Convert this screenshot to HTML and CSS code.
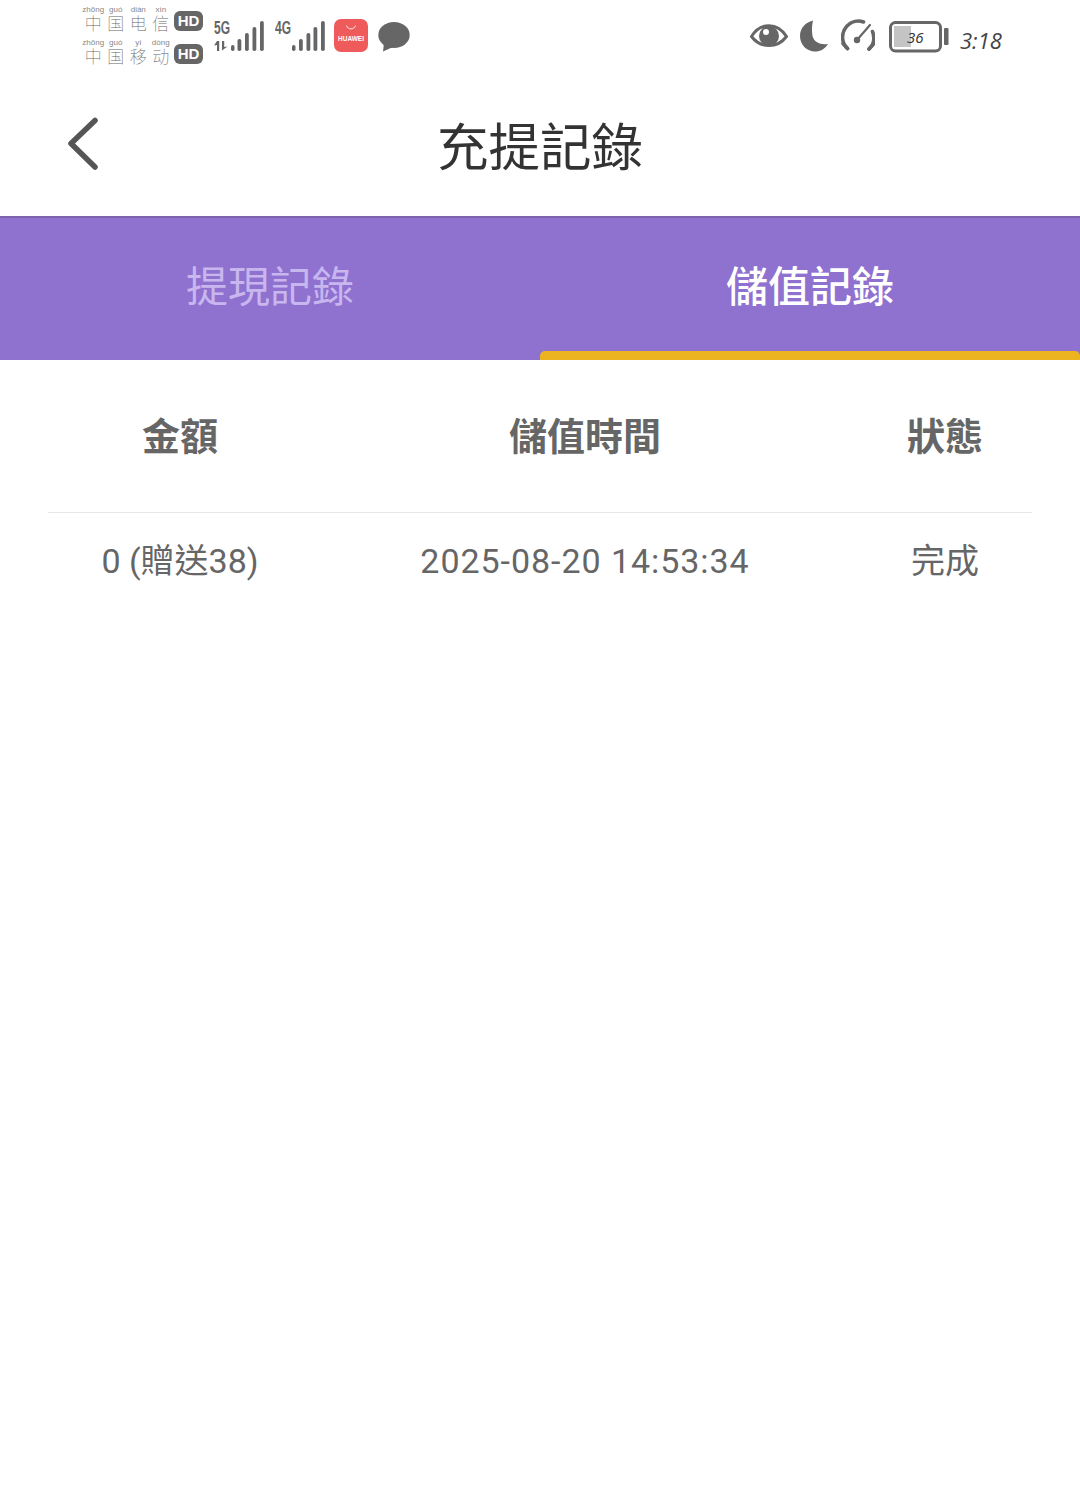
FILE: index.html
```html
<!DOCTYPE html>
<html lang="zh-Hant">
<head>
<meta charset="utf-8">
<title>充提記錄</title>
<link rel="stylesheet" href="styles.css">
</head>
<body>
<div class="page">
  <div class="status">
    <div class="carriers">
      <div class="carrier">
        <span class="hz"><i>zhōng</i><b>中</b></span>
        <span class="hz"><i>guó</i><b>国</b></span>
        <span class="hz"><i>diàn</i><b>电</b></span>
        <span class="hz"><i>xìn</i><b>信</b></span>
        <span class="hd">HD</span>
      </div>
      <div class="carrier">
        <span class="hz"><i>zhōng</i><b>中</b></span>
        <span class="hz"><i>guó</i><b>国</b></span>
        <span class="hz"><i>yí</i><b>移</b></span>
        <span class="hz"><i>dòng</i><b>动</b></span>
        <span class="hd">HD</span>
      </div>
    </div>
    <svg class="ico sig1" width="50" height="72" viewBox="214 0 50 72" fill="#666">
      <text x="214" y="34" class="sigt" textLength="16" lengthAdjust="spacingAndGlyphs">5G</text>
      <path d="M217 41h2.200v10H217v-6l-3 0.500zM222 41h2.200v6l3.300-.5-5.500 4z"/>
      <rect x="231" y="45" width="3.500" height="6" rx="1.700"/>
      <rect x="237.500" y="39" width="3.800" height="12" rx="1.800"/>
      <rect x="245" y="33" width="3.800" height="18" rx="1.800"/>
      <rect x="252.500" y="27" width="3.800" height="24" rx="1.800"/>
      <rect x="260" y="21" width="3.800" height="30" rx="1.800"/>
    </svg>
    <svg class="ico sig2" width="50" height="72" viewBox="275 0 50 72" fill="#666">
      <text x="275" y="34" class="sigt" textLength="16" lengthAdjust="spacingAndGlyphs">4G</text>
      <rect x="292" y="45" width="3.500" height="6" rx="1.700"/>
      <rect x="299" y="39" width="3.800" height="12" rx="1.800"/>
      <rect x="306.500" y="33" width="3.800" height="18" rx="1.800"/>
      <rect x="313.500" y="27" width="3.800" height="24" rx="1.800"/>
      <rect x="321" y="21" width="3.800" height="30" rx="1.800"/>
    </svg>
    <svg class="ico hw" width="34" height="72" viewBox="334 0 34 72">
      <rect x="334" y="19" width="34" height="33" rx="7" fill="#ef5a5b"/>
      <path d="M346.500 25.500c1 4.500 8 4.500 9 0" fill="none" stroke="#fff" stroke-width="1" opacity=".85"/>
      <text x="351" y="41" class="hwt">HUAWEI</text>
    </svg>
    <svg class="ico chat" width="32" height="72" viewBox="378 0 32 72" fill="#666">
      <ellipse cx="394" cy="35" rx="15.700" ry="13"/>
      <path d="M384 43l-1 8.500 11-5z"/>
    </svg>
    <div class="grow"></div>
    <svg class="ico eye" width="38" height="72" viewBox="750 0 38 72">
      <path d="M751.500 36.500c9-14.500 26-14.500 35 0c-9 12-26 12-35 0z" fill="none" stroke="#666" stroke-width="3"/>
      <circle cx="769" cy="36" r="10" fill="#666"/>
      <circle cx="766" cy="32" r="3" fill="#fff"/>
    </svg>
    <svg class="ico moon" width="28" height="72" viewBox="800 0 28 72" fill="#666">
      <path d="M813 20.500c-8 2-13 8-13 15.500c0 9 7 15.500 15 15.500c5.500 0 10-2.500 13-7.500c-8 1-14-2-15.500-8c-1-5-.5-11 .5-15.500z"/>
    </svg>
    <svg class="ico gauge" width="34" height="72" viewBox="841 0 34 72" fill="none" stroke="#666" stroke-width="3.600" stroke-linecap="round">
      <path d="M847.500 48.500c-6.500-6-6.500-16-.5-22.500c4.500-4.500 11-6 16.500-4"/>
      <path d="M843 43.500l4.500 5"/>
      <path d="M869 49c5.500-5 5.500-12 3.500-17.500"/>
      <path d="M873.500 44l-4.500 5"/>
      <path d="M857 40l13-15" stroke-width="2.200"/>
      <circle cx="857" cy="40" r="3.200" fill="#666" stroke="none"/>
    </svg>
    <svg class="ico batt" width="60" height="72" viewBox="889 0 60 72">
      <rect x="890.500" y="22.500" width="50" height="28.500" rx="5" fill="none" stroke="#666" stroke-width="3"/>
      <rect x="894" y="26" width="17" height="21" fill="#c4c4c4"/>
      <rect x="944" y="28" width="4.500" height="17" rx="1" fill="#666"/>
      <text x="907" y="43" class="batt-t">36</text>
    </svg>
    <span class="clock">3:18</span>
  </div>

  <header class="bar">
    <svg class="back" width="32" height="54" viewBox="0 0 32 54" fill="none" stroke="#555" stroke-width="5.500" stroke-linecap="round" stroke-linejoin="round">
      <path d="M28 3.500L4 26.500L28 50"/>
    </svg>
    <h1 class="title">充提記錄</h1>
  </header>

  <nav class="tabs">
    <div class="tab">提現記錄</div>
    <div class="tab active">儲值記錄</div>
  </nav>

  <section class="table">
    <div class="row head">
      <div>金額</div>
      <div>儲值時間</div>
      <div>狀態</div>
    </div>
    <div class="row item">
      <div>0 (贈送38)</div>
      <div class="stamp">2025-08-20 14:53:34</div>
      <div>完成</div>
    </div>
  </section>
</div>
</body>
</html>
```
FILE: styles.css
```css
* { box-sizing: border-box; }
html, body { margin: 0; padding: 0; background: #fff; }
body { font-family: Roboto, "Noto Sans CJK TC", sans-serif; }
.page { width: 1080px; height: 1486px; overflow: hidden; background: #fff; }

.status { height: 72px; display: flex; align-items: flex-start; padding-left: 82px; padding-right: 80px; }
.ico { display: block; flex: none; }
.carriers { width: 121px; height: 72px; padding-top: 5px; display: flex; flex-direction: column; gap: 3px; }
.carrier { display: flex; height: 30px; position: relative; }
.hz { width: 22.500px; display: flex; flex-direction: column; align-items: center; }
.hz i { font-family: "Liberation Sans", sans-serif; font-style: normal; font-size: 8px; line-height: 9px; color: #888; white-space: nowrap; }
.hz b { font-family: "Noto Sans CJK SC", sans-serif; font-weight: 100; font-size: 17px; line-height: 17px; color: #666; }
.hd { position: absolute; left: 92px; top: 6px; width: 29px; height: 20px; border-radius: 6px; background: #666; color: #fff; font: 700 15px/20px "Liberation Sans", sans-serif; text-align: center; }
.sig1 { margin-left: 11px; }
.sig2 { margin-left: 11px; }
.hw { margin-left: 9px; }
.chat { margin-left: 10px; }
.grow { flex: 1; }
.moon { margin-left: 12px; }
.gauge { margin-left: 13px; }
.batt { margin-left: 14px; }
.sigt { font: 700 18px "Liberation Sans", sans-serif; fill: #666; }
.hwt { font: 700 6.500px "Liberation Sans", sans-serif; fill: #fff; text-anchor: middle; }
.batt-t { font: italic 400 15px "Open Sans", sans-serif; fill: #333; }
.clock { margin-left: 11px; width: 40px; height: 72px; font: italic 400 22px/80px "Open Sans", sans-serif; color: #444; white-space: nowrap; }

.bar { height: 144px; display: flex; align-items: center; justify-content: center; position: relative; }
.back { position: absolute; left: 67px; top: 45px; }
.title { margin: 0; font-family: "Noto Sans CJK TC", sans-serif; font-weight: 400; font-size: 51.500px; line-height: 1; color: #333; }

.tabs { height: 144px; display: flex; background: #8f71d0; border-top: 2px solid #7c64ad; }
.tab { flex: 1; display: flex; align-items: center; justify-content: center; font-family: "Noto Sans CJK TC", sans-serif; font-size: 42px; color: #c8b6ee; padding-bottom: 12px; }
.tab.active { color: #fff; font-weight: 500; position: relative; }
.tab.active::after { content: ""; position: absolute; left: 0; right: 0; bottom: 0; height: 9px; background: #edb421; border-radius: 5px 5px 0 0; }

.table { margin: 0 48px; }
.row { display: grid; grid-template-columns: 264px 546px 174px; text-align: center; color: #666; }
.head { height: 153px; padding-top: 44px; border-bottom: 1px solid #e8e8e8; font-family: "Noto Sans CJK TC", sans-serif; font-weight: 700; font-size: 38px; line-height: 60px; }
.item { padding-top: 23px; font-size: 34px; line-height: 50px; }
.stamp { letter-spacing: .95px; }
```
